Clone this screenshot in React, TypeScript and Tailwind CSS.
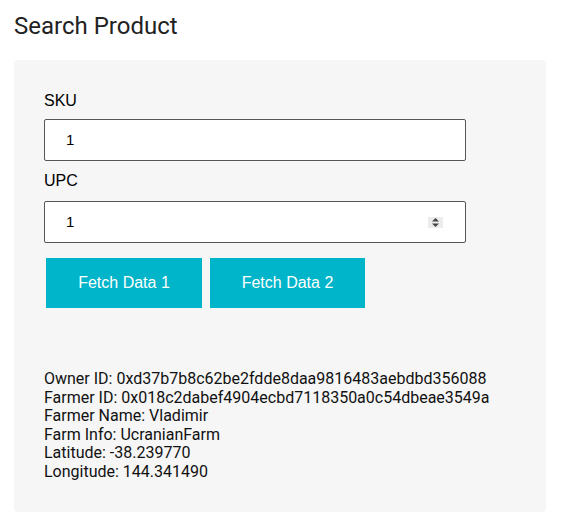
const info = [
  "Owner ID: 0xd37b7b8c62be2fdde8daa9816483aebdbd356088",
  "Farmer ID: 0x018c2dabef4904ecbd7118350a0c54dbeae3549a",
  "Farmer Name: Vladimir",
  "Farm Info: UcranianFarm",
  "Latitude: -38.239770",
  "Longitude: 144.341490",
];

const SpinIcon = () => (
  <span className="absolute right-[22px] top-[15px] flex h-[11px] w-[15px] items-center justify-center bg-[#ececec]">
    <svg width="9" height="11" viewBox="0 0 9 11">
      <path d="M4.5 1 L8 4.5 L1 4.5 Z" fill="#444" />
      <path d="M4.5 10 L8 6.5 L1 6.5 Z" fill="#444" />
    </svg>
  </span>
);

export default function App() {
  return (
    <div className="min-h-screen bg-white px-[14px] pt-[12px]" style={{ fontFamily: "Roboto, sans-serif" }}>
      <h1 className="text-[24px] leading-[28px] text-[#222]">Search Product</h1>
      <div className="mt-[20px] w-[532px] rounded-[4px] bg-[#f6f6f6] px-[30px] pt-[32px] pb-[30px]">
        <div className="font-['Liberation_Sans',Arial,sans-serif] text-[16px] text-black">
          <label className="block leading-[18px]">SKU</label>
          <div className="mt-[9px] flex h-[42px] w-[422px] items-center rounded-[2px] border border-[#555] bg-white pl-[21px] text-[15px]">
            1
          </div>
          <label className="mt-[11px] block leading-[18px]">UPC</label>
          <div className="relative mt-[11px] flex h-[42px] w-[422px] items-center rounded-[2px] border border-[#555] bg-white pl-[21px] text-[15px]">
            1
            <SpinIcon />
          </div>
          <div className="mt-[15px] ml-[2px] flex gap-[8px]">
            <button className="h-[50px] w-[156px] bg-[#00b4c9] text-[16px] text-white">Fetch Data 1</button>
            <button className="h-[50px] w-[155px] bg-[#00b4c9] text-[16px] text-white">Fetch Data 2</button>
          </div>
        </div>
        <div className="mt-[62px] text-[16px] leading-[18.6px] text-[#111]">
          {info.map((line, i) => (
            <div key={i}>{line}</div>
          ))}
        </div>
      </div>
    </div>
  );
}
